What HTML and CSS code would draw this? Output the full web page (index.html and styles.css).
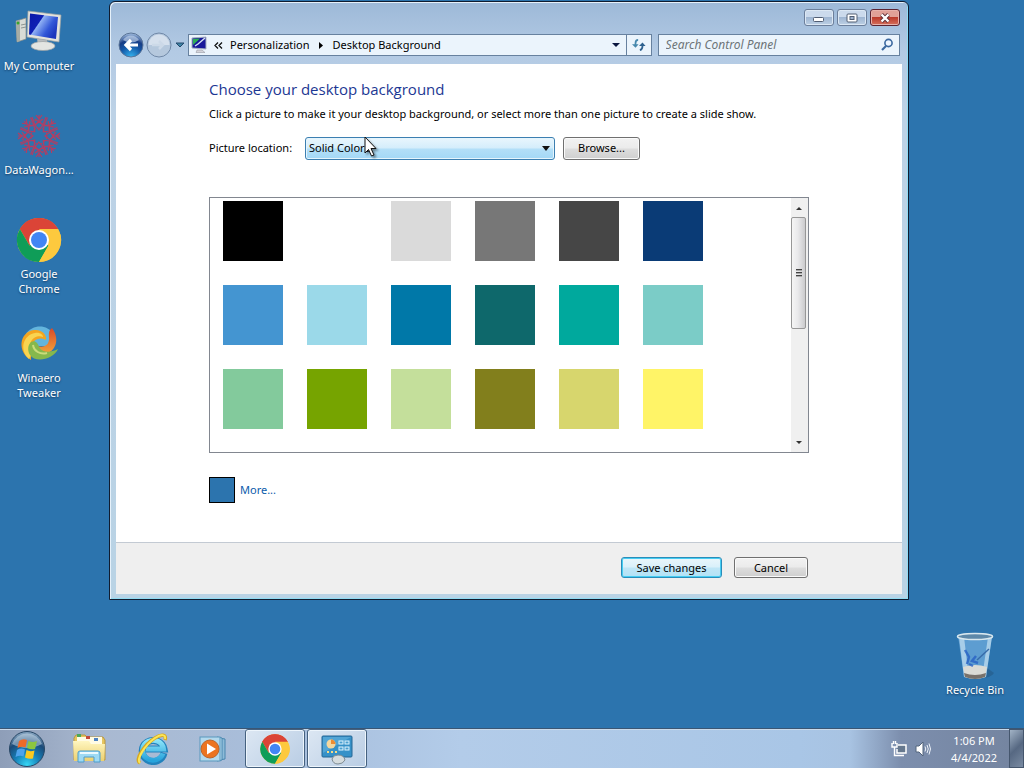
FILE: index.html
```html
<!DOCTYPE html>
<html lang="en">
<head>
<meta charset="utf-8">
<title>Desktop Background</title>
<link rel="stylesheet" href="styles.css">
</head>
<body>
<svg class="defs" aria-hidden="true">
  <defs>
    <symbol id="chrome" viewBox="0 0 48 48">
      <circle cx="24" cy="24" r="22" fill="#fdc93e"/>
      <path d="M24 24 L4.9 13 A22 22 0 0 1 43 13 Z" fill="#db4437"/>
      <path d="M24 13 H43.1 A22 22 0 0 0 4.9 13 L14.5 29.5 Z" fill="#db4437"/>
      <path d="M4.9 13 A22 22 0 0 0 24 46 L33.5 29.5 L24 24 L14.5 29.5 Z" fill="#0f9d58"/>
      <path d="M24 46 A22 22 0 0 0 43.1 13 H24 L33.5 29.5 Z" fill="#fdc93e"/>
      <circle cx="24" cy="24" r="10" fill="#fff"/>
      <circle cx="24" cy="24" r="8" fill="#4285f4"/>
    </symbol>
    <linearGradient id="screen" x1="0" y1="0" x2="1" y2=".6">
      <stop offset="0" stop-color="#0a18a8"/><stop offset=".4" stop-color="#0f1fb4"/><stop offset=".43" stop-color="#8fb0f4"/><stop offset=".75" stop-color="#3358d8"/><stop offset="1" stop-color="#1b35bd"/>
    </linearGradient>
    <linearGradient id="pane" x1="0" y1="0" x2="0" y2="1">
      <stop offset="0" stop-color="#fff6c0"/><stop offset="1" stop-color="#ecd06f"/>
    </linearGradient>
    <radialGradient id="orb" cx=".5" cy=".95" r=".9">
      <stop offset="0" stop-color="#35d6f5"/><stop offset=".4" stop-color="#1680b8"/><stop offset=".75" stop-color="#1b4a78"/><stop offset="1" stop-color="#7f9fbc"/>
    </radialGradient>
    <radialGradient id="back" cx=".5" cy="1" r="1">
      <stop offset="0" stop-color="#35b5f0"/><stop offset=".45" stop-color="#1459a8"/><stop offset=".7" stop-color="#183d85"/><stop offset="1" stop-color="#a9c4e4"/>
    </radialGradient>
    <linearGradient id="ie" x1="0" y1="0" x2="0" y2="1">
      <stop offset="0" stop-color="#8de4f8"/><stop offset="1" stop-color="#27a4dc"/>
    </linearGradient>
    <linearGradient id="flame" x1="0" y1="0" x2="0" y2="1">
      <stop offset="0" stop-color="#d94a28"/><stop offset="1" stop-color="#f4a53a"/>
    </linearGradient>
  </defs>
</svg>

<main class="desktop">
  <nav class="shortcuts" aria-label="Desktop shortcuts">
    <a class="shortcut" href="#computer">
      <svg class="shortcut-icon" viewBox="0 0 48 48" aria-hidden="true">
        <path d="M1 13 L11 10 V31 L2 34 Z" fill="#d9dcd6" stroke="#878c88" stroke-width=".7"/>
        <path d="M1 13 L5 12 V33 L2 34 Z" fill="#a7ada5"/>
        <circle cx="3" cy="15" r="1.500" fill="#36a62e"/>
        <path d="M6 17 L11 16 M6 20 L11 19" stroke="#8e9692"/>
        <path d="M22 30 L32 32 V38 H23 Z" fill="#b8bdc0"/>
        <ellipse cx="28" cy="38" rx="12" ry="4.500" fill="#e3e5e2" stroke="#9a9fa0" stroke-width=".7"/>
        <path d="M13 3 L46 7 L44 34 L12 29 Z" fill="#e4e3dc" stroke="#9aa0a2" stroke-width=".7"/>
        <path d="M15 5.500 L43 9 L41 31 L14 26.500 Z" fill="url(#screen)"/>
      </svg>
      <span>My Computer</span>
    </a>
    <a class="shortcut" href="#datawagon">
      <svg class="shortcut-icon" viewBox="-24 -24 48 48" aria-hidden="true" fill="none" stroke="#b43d62">
        <g id="ray" stroke-width="1.200">
          <path d="M0 -6 L-4 -11 L0 -15 L4 -11 Z M0 -15 V-21 M-4 -11 L-7 -19 M4 -11 L7 -19 M-3 -21 L0 -17 L3 -21 M-4 -11 L4 -17 M4 -11 L-4 -17"/>
        </g>
        <use href="#ray" transform="rotate(45)"/><use href="#ray" transform="rotate(90)"/><use href="#ray" transform="rotate(135)"/>
        <use href="#ray" transform="rotate(180)"/><use href="#ray" transform="rotate(225)"/><use href="#ray" transform="rotate(270)"/><use href="#ray" transform="rotate(315)"/>
        <circle r="8" stroke-dasharray="3 1.500"/><circle r="16" stroke-dasharray="2 3" stroke="#90506f"/>
      </svg>
      <span>DataWagon...</span>
    </a>
    <a class="shortcut" href="#chrome-app">
      <svg class="shortcut-icon" viewBox="0 0 48 48" aria-hidden="true"><use href="#chrome"/></svg>
      <span>Google<br>Chrome</span>
    </a>
    <a class="shortcut" href="#winaero">
      <svg class="shortcut-icon" viewBox="0 0 48 48" aria-hidden="true">
        <path d="M11 14 C17 4 33 4 38 14 L35 26 L24 26 L14 24Z" fill="#64b5dd"/>
        <path d="M37 8 C46 20 40 34 27 34 C20 34 17 30 19 24 C25 29 34 27 34 19 C34 14 33 11 37 8Z" fill="url(#flame)"/>
        <path d="M16 40 C2 32 4 12 19 10 C27 9 32 15 31 20 C24 16 17 20 16 28 Z" fill="#f4a51f"/>
        <path d="M14 39 C4 30 8 15 20 13 C25 12 28 15 28 17 C20 14 11 22 17 33 Z" fill="#f9d451"/>
        <path d="M16 22 C20 20 23 23 24 27 C28 33 35 33 43 29 C38 40 20 43 15 35 C12 30 13 25 16 22Z" fill="#86b84c"/>
        <path d="M18 25 C19 31 25 35 32 33" stroke="#cbdc7b" stroke-width="2" fill="none"/>
      </svg>
      <span>Winaero<br>Tweaker</span>
    </a>
  </nav>

  <section class="window" aria-label="Desktop Background">
    <div class="caption">
      <button class="caption-button" aria-label="Minimize"><svg width="14" height="10" viewBox="0 0 14 10"><rect x="1.500" y="4.500" width="10" height="4" rx="1" fill="#fff" stroke="#515e73"/></svg></button>
      <button class="caption-button" aria-label="Maximize"><svg width="12" height="10" viewBox="0 0 12 10"><rect x="1" y="1" width="10" height="8" rx="1" fill="#fff" stroke="#515e73"/><rect x="4" y="3.500" width="4" height="3" fill="#9fb4cf" stroke="#515e73"/></svg></button>
      <button class="caption-button close" aria-label="Close"><svg width="12" height="10" viewBox="0 0 12 10"><path d="M2.500 1.500 L9.500 8.500 M9.500 1.500 L2.500 8.500" stroke="#5b2d35" stroke-width="4"/><path d="M2.500 1.500 L9.500 8.500 M9.500 1.500 L2.500 8.500" stroke="#fff" stroke-width="2.400"/></svg></button>
    </div>

    <div class="toolbar">
      <div class="history">
        <button class="round" aria-label="Back"><svg width="26" height="26" viewBox="0 0 26 26"><circle cx="13" cy="13" r="12" fill="url(#back)" stroke="#5b7598"/><path d="M5 8 A9.500 9.500 0 0 1 21 8 Q13 13 5 8Z" fill="#c6d9ef" opacity=".65"/><path d="M20 13 H9 M13 8 L8 13 L13 18" stroke="#fff" stroke-width="3.200" fill="none"/></svg></button>
        <button class="round" aria-label="Forward"><svg width="26" height="26" viewBox="0 0 26 26"><circle cx="13" cy="13" r="12" fill="#b5c8dd" stroke="#7189a8"/><path d="M2.500 13 A10.500 10.500 0 0 1 23.500 13 Z" fill="#d5e0ed"/><path d="M6 13 H17 M13 9 L17 13 L13 17" stroke="#ccd9e8" stroke-width="2.500" fill="none"/></svg></button>
        <button class="recent" aria-label="Recent pages"><svg width="10" height="6" viewBox="0 0 10 6"><path d="M1 1 H9 L5 5Z" fill="#3e84a5" stroke="#24486c"/></svg></button>
      </div>
      <div class="address">
        <svg width="18" height="18" viewBox="0 0 18 18" aria-hidden="true"><path d="M1 2 L15 1 V13 L1 12Z" fill="#18189a" stroke="#a7b2c2"/><path d="M2 3 L9 2.500 L2 9Z" fill="#2dae55"/><path d="M4 10 L7 8 L14 2" stroke="#d3e1f3" stroke-width="1.500" fill="none"/><path d="M6 14 H11 L14 16.500 H5Z" fill="#d4d4da" stroke="#8c8f99" stroke-width=".5"/></svg>
        <svg width="9" height="7" viewBox="0 0 9 7" aria-hidden="true"><path d="M4 .5 L1 3.500 L4 6.500 M8 .5 L5 3.500 L8 6.500" fill="none" stroke="#111" stroke-width="1.300"/></svg>
        <a class="crumb" href="#personalization">Personalization</a>
        <svg class="crumb-arrow" width="4" height="7" viewBox="0 0 4 7" aria-hidden="true"><path d="M0 0 L4 3.500 L0 7Z"/></svg>
        <a class="crumb" href="#desktop-background">Desktop Background</a>
        <button class="address-drop" aria-label="Previous locations"><svg width="8" height="4" viewBox="0 0 8 4"><path d="M0 0 H8 L4 4Z" fill="#0b1740"/></svg></button>
        <button class="refresh" aria-label="Refresh"><svg width="14" height="14" viewBox="0 0 16 14"><path d="M7 1 Q4 1 4 5 V7" stroke="#4688ad" stroke-width="2" fill="none"/><path d="M0 6 H7.500 L4 10Z" fill="#4688ad"/><path d="M9 13 Q12 12 12 8 V7" stroke="#2d608e" stroke-width="2" fill="none"/><path d="M8 8 H15.500 L12 4Z" fill="#2d608e"/></svg></button>
      </div>
      <label class="search">
        <input type="search" placeholder="Search Control Panel" aria-label="Search Control Panel">
        <svg width="14" height="14" viewBox="0 0 14 14" aria-hidden="true"><circle cx="8.500" cy="5" r="3.600" fill="#eef6ff" stroke="#3b689f" stroke-width="1.600"/><path d="M6 8 L2 12" stroke="#3b689f" stroke-width="2.200"/></svg>
      </label>
    </div>

    <form class="client">
      <div class="content">
        <h1>Choose your desktop background</h1>
        <p>Click a picture to make it your desktop background, or select more than one picture to create a slide show.</p>
        <div class="location">
          <label for="location">Picture location:</label>
          <div class="combo">
            <select id="location"><option>Solid Colors</option></select>
            <svg class="combo-arrow" width="8" height="5" viewBox="0 0 8 5" aria-hidden="true"><path d="M0 0 H8 L4 5Z" fill="#111"/></svg>
          </div>
          <button class="button browse" type="button">Browse...</button>
        </div>
        <div class="gallery">
          <div class="swatches">
            <button type="button" class="swatch black" aria-label="Black"></button>
            <button type="button" class="swatch white" aria-label="White"></button>
            <button type="button" class="swatch silver" aria-label="Light gray"></button>
            <button type="button" class="swatch gray" aria-label="Gray"></button>
            <button type="button" class="swatch charcoal" aria-label="Dark gray"></button>
            <button type="button" class="swatch navy" aria-label="Navy"></button>
            <button type="button" class="swatch blue" aria-label="Blue"></button>
            <button type="button" class="swatch sky" aria-label="Light blue"></button>
            <button type="button" class="swatch cerulean" aria-label="Cerulean"></button>
            <button type="button" class="swatch pine" aria-label="Dark teal"></button>
            <button type="button" class="swatch teal" aria-label="Teal"></button>
            <button type="button" class="swatch aqua" aria-label="Aqua"></button>
            <button type="button" class="swatch mint" aria-label="Mint"></button>
            <button type="button" class="swatch green" aria-label="Green"></button>
            <button type="button" class="swatch lime" aria-label="Light green"></button>
            <button type="button" class="swatch olive" aria-label="Olive"></button>
            <button type="button" class="swatch khaki" aria-label="Khaki"></button>
            <button type="button" class="swatch yellow" aria-label="Yellow"></button>
          </div>
          <div class="scrollbar">
            <button type="button" class="scroll-step" aria-label="Scroll up"><svg width="6" height="3" viewBox="0 0 6 3"><path d="M3 0 L6 3 H0Z" fill="#333"/></svg></button>
            <div class="thumb"><svg width="6" height="8" viewBox="0 0 6 8"><path d="M0 .5 H6 M0 3.500 H6 M0 6.500 H6" stroke="#444"/><path d="M0 1.500 H6 M0 4.500 H6 M0 7.500 H6" stroke="#aaa"/></svg></div>
            <button type="button" class="scroll-step bottom" aria-label="Scroll down"><svg width="6" height="3" viewBox="0 0 6 3"><path d="M0 0 H6 L3 3Z" fill="#333"/></svg></button>
          </div>
        </div>
        <div class="more"><span class="current"></span><a href="#more">More...</a></div>
      </div>
      <div class="actions">
        <button class="button save" type="button">Save changes</button>
        <button class="button cancel" type="button">Cancel</button>
      </div>
    </form>
  </section>

  <a class="shortcut recycle" href="#recycle">
    <svg class="shortcut-icon" viewBox="0 0 48 48" aria-hidden="true">
      <path d="M36 36 L43 41 Q40 46 30 46Z" fill="#245a86" opacity=".6"/>
      <path d="M7 4 L41 4 L35 45 Q24 49 13 45Z" fill="#6eabdc" opacity=".75"/>
      <path d="M8 5 L13 5 L18 46 L13 45Z M37 5 L41 5 L35 45 L31 46Z" fill="#c8e1f2" opacity=".7"/>
      <path d="M12 35 Q24 31 36 35 L34 45 Q24 49 14 45Z" fill="#dadbd6"/>
      <path d="M13 41 Q24 45 35 41 L34 45 Q24 49 14 45Z" fill="#77716b"/>
      <path d="M14 18 L18 25 L16 32 M25 24 L21 29 L27 31 M18 32 L22 34" stroke="#2862c4" stroke-width="2.500" fill="none" opacity=".8"/>
      <path d="M38 17 L26 28" stroke="#386caa" stroke-width="1.500"/>
      <ellipse cx="24" cy="4.500" rx="17.500" ry="3" fill="#5d88a9" stroke="#d9e8ef" stroke-width="1.500"/>
    </svg>
    <span>Recycle Bin</span>
  </a>
  <svg class="cursor" width="14" height="22" viewBox="0 0 14 22" aria-hidden="true"><path d="M1 1 V17 L4.500 13.500 L7.500 20 L10 19 L7 12.500 H12Z" fill="#fff" stroke="#111"/></svg>
</main>

<footer class="taskbar">
  <button class="start" aria-label="Start">
    <svg width="38" height="38" viewBox="0 0 38 38"><circle cx="19" cy="19" r="17.500" fill="url(#orb)" stroke="#284765"/><path d="M4 14 A16 16 0 0 1 34 14 Q19 22 4 14Z" fill="#e1edf6" opacity=".45"/>
    <path d="M11 11 Q15 8 19 10 L17.500 17.500 Q14 16 9.500 18Z" fill="#ee6a28"/><path d="M20.500 11 Q25 13 29 11 L27 19 Q23 20 19 18Z" fill="#8cc63f"/><path d="M9 20 Q13 17.500 17 19.500 L15.500 26.500 Q12 25 7.500 27Z" fill="#4ea3ec"/><path d="M18.500 20 Q22 22 26.500 20.500 L25 28.500 Q21 29.500 17 27.500Z" fill="#fbc91f"/></svg>
  </button>
  <button class="pin explorer" aria-label="Windows Explorer">
    <svg width="34" height="32" viewBox="0 0 34 32"><path d="M2 5 L4 2 H13 L15 4 H31 L33 7 V27 H2Z" fill="#e6c55f" stroke="#b99742"/><path d="M5 4 H30 V12 H5Z" fill="#fffbe4"/><rect x="5" y="1" width="4" height="3" fill="#4ba75a"/><rect x="14" y="3" width="4" height="3" fill="#c4493c"/><rect x="22" y="5" width="4" height="3" fill="#4e82c2"/><path d="M1 8 H17 L19 11 H33 L32 28 H2Z" fill="url(#pane)"/><path d="M6 29 V20 Q6 18 8 18 H26 Q28 18 28 20 V29 H22 V24 H12 V29Z" fill="#9edaf3" stroke="#4c9dcb"/><path d="M8 20 H26" stroke="#eafaff" stroke-width="2"/></svg>
  </button>
  <button class="pin ie" aria-label="Internet Explorer">
    <svg width="34" height="32" viewBox="0 0 34 32"><path d="M29 20 A11 10.500 0 1 1 29 16 H11" fill="none" stroke="#2283bd" stroke-width="7"/><path d="M28 20.500 A10.500 10 0 1 1 28.500 16 H11" fill="none" stroke="url(#ie)" stroke-width="5"/><path d="M5 30 C-1 27 10 11 20 5 C26 1 32 1 30 7" fill="none" stroke="#d9a91e" stroke-width="3.500"/><path d="M5 30 C1 26 10 12 20 5 C26 1 31 1 30 6" fill="none" stroke="#fbe558" stroke-width="2"/></svg>
  </button>
  <button class="pin wmp" aria-label="Windows Media Player">
    <svg width="28" height="28" viewBox="0 0 28 28"><path d="M20 3 L26 4 V24 L20 25Z" fill="#8dbbd8" stroke="#4886af"/><path d="M18 2 L23 3 V25 L18 26Z" fill="#b6dbee" stroke="#4886af"/><rect x="1" y="2" width="20" height="24" fill="#b3d9ed" stroke="#5b98bd"/><circle cx="11" cy="14" r="9" fill="#ec7420" stroke="#bd6428"/><path d="M8 8.500 L17 14 L8 19.500Z" fill="#fff"/></svg>
  </button>
  <button class="task" aria-label="Google Chrome"><svg width="32" height="32"><use href="#chrome"/></svg></button>
  <button class="task" aria-label="Desktop Background">
    <svg width="34" height="32" viewBox="0 0 34 32"><rect x="2" y="3" width="30" height="21" rx="1" fill="#3691c8" stroke="#256695"/><path d="M3 4 H31 L3 20Z" fill="#6eb9e1" opacity=".5"/><circle cx="11" cy="11" r="4.500" fill="#f5d79d"/><path d="M11 11 V6.500 A4.500 4.500 0 0 1 15.500 11Z" fill="#ee8c31"/><path d="M7 19 H9 M11 19 H13 M15 19 H17" stroke="#f4dc88" stroke-width="2"/><g fill="#4a9fd0" stroke="#e0f5ff"><rect x="19" y="8" width="4" height="3"/><rect x="25" y="8" width="4" height="3"/><rect x="19" y="14" width="4" height="3"/><rect x="25" y="14" width="4" height="3"/></g><path d="M12 26 Q13 22 18 22 Q24 22 25 27 Q23 31 18 31 Q13 31 12 26Z" fill="#d5dcde" stroke="#7e8b92"/></svg>
  </button>
  <div class="tray">
    <svg width="16" height="16" viewBox="0 0 16 16" aria-label="Network"><path d="M7 4 H15 V12 H6 V8" fill="#66788e" stroke="#fff" stroke-width="1.500"/><path d="M8 14.500 H13 M1 2 V6 H6 V2 M2.500 0 V3 M4.500 0 V3 M3.500 6 V14.500 H8" stroke="#fff" stroke-width="1.400" fill="none"/></svg>
    <svg width="16" height="16" viewBox="0 0 16 16" aria-label="Volume"><path d="M1 5 H4 L8 1 V15 L4 11 H1Z" fill="#fff" stroke="#52647c"/><path d="M10 5.500 Q11.500 8 10 10.500 M12 4 Q14.500 8 12 12 M14 2.500 Q17 8 14 13.500" stroke="#eef3fa" fill="none"/></svg>
    <time class="clock" datetime="2022-04-04T13:06"><span>1:06 PM</span><span>4/4/2022</span></time>
  </div>
  <button class="peek" aria-label="Show desktop"></button>
</footer>
</body>
</html>
```

FILE: styles.css
```css
* { box-sizing: border-box; }
body {
  margin: 0;
  min-height: 100vh;
  display: flex;
  flex-direction: column;
  background: #2c74ae;
  color: #000;
  font: 11px/16px "Noto Sans", "Open Sans", sans-serif;
}
button, input, select { font: inherit; color: inherit; }
button { padding: 0; border: 0; background: none; }
svg { display: block; flex: none; }
a { text-decoration: none; }
.defs { position: absolute; width: 0; height: 0; }

.desktop { position: relative; flex: 1; min-height: 640px; }
.shortcuts { width: 78px; padding-top: 8px; }
.shortcut {
  display: flex;
  flex-direction: column;
  align-items: center;
  gap: 2px;
  height: 104px;
  color: #fff;
  line-height: 15px;
  text-align: center;
  white-space: nowrap;
  text-shadow: 0 1px 2px #123a60;
}
.shortcut-icon { width: 48px; height: 48px; }
.recycle { position: absolute; right: 10px; bottom: -8px; width: 78px; }
.cursor { position: absolute; left: 364px; top: 136px; filter: drop-shadow(2px 2px 1px #0006); }

.window {
  position: absolute;
  left: 109px;
  right: 115px;
  top: 1px;
  padding: 0 6px 5px;
  border: 1px solid #101c30;
  border-radius: 6px 6px 0 0;
  background: linear-gradient(#9db9d8, #b3cae4 50px, #bdd2e6 110px, #b9d3e5);
  box-shadow: inset 1px 1px #e6f1fa, inset -1px -1px #8fdcf4;
}
.caption { display: flex; justify-content: flex-end; gap: 3px; padding: 7px 2px 6px; }
.caption-button {
  display: grid;
  place-items: center;
  width: 30px;
  height: 17px;
  border: 1px solid #6c7f9b;
  border-radius: 3px;
  background: linear-gradient(#cbdaec 45%, #9fb6d2 50%, #bdd0e5);
  box-shadow: inset 0 0 0 1px #dce8f4;
}
.close { border-color: #5c2330; background: linear-gradient(#e0a097 45%, #bb3a2b 50%, #d5705c); box-shadow: inset 0 0 0 1px #e7b1aa; }
.toolbar { display: flex; align-items: center; gap: 2px; height: 32px; padding: 0 2px 6px; }
.history { display: flex; align-items: center; gap: 2px; }
.recent { width: 12px; display: grid; place-items: center; }
.address, .search {
  display: flex;
  align-items: center;
  height: 22px;
  border: 1px solid #67819f;
  background: #ebf4fc;
}
.address { flex: 1; gap: 5px; padding-left: 2px; margin-right: 4px; }
.crumb { margin-left: 2px; color: #000; }
.crumb-arrow { margin: 0 3px 0 4px; }
.address-drop { margin-left: auto; width: 20px; height: 20px; display: grid; place-items: center; }
.refresh { width: 25px; height: 20px; margin-left: -5px; display: grid; place-items: center; border-left: 1px solid #67819f; }
.search { width: 31%; padding: 0 5px 0 7px; }
.search input { flex: 1; min-width: 0; padding: 0; border: 0; outline: 0; background: none; font-size: 12px; }
.search input::placeholder { color: #6d7478; font-style: italic; opacity: 1; }

.client { margin: 0; background: #fff; }
.content { padding: 15px 93px 39px; }
h1 { margin: 0; font: 400 15px/20px "Open Sans", "Noto Sans", sans-serif; color: #1c3793; }
p { margin: 7px 0 0; white-space: nowrap; }
.location { display: flex; align-items: center; gap: 8px; margin-top: 14px; height: 24px; }
.location label { width: 88px; white-space: nowrap; }
.combo { position: relative; width: 250px; }
.combo select {
  display: block;
  width: 100%;
  height: 23px;
  padding: 0 3px;
  appearance: none;
  border: 1px solid #3c7fb1;
  border-radius: 3px;
  background: linear-gradient(#e9f6fd, #d4edfb 48%, #b3dff8 52%, #a3d8f6);
  box-shadow: inset 0 0 0 1px #e5f5fd;
}
.combo-arrow { position: absolute; right: 5px; top: 9px; pointer-events: none; }
.button {
  height: 23px;
  border: 1px solid #707070;
  border-radius: 3px;
  background: linear-gradient(#f2f2f2, #ebebeb 48%, #dddddd 52%, #cfcfcf);
  box-shadow: inset 0 0 0 1px #fafafa;
}
.browse { width: 77px; }
.gallery { display: flex; justify-content: space-between; margin-top: 37px; border: 1px solid #828790; min-height: 256px; }
.swatches { display: grid; grid-template-columns: repeat(6, 60px); grid-auto-rows: 60px; gap: 24px; padding: 3px 0 0 13px; }
.swatch.black { background: #000; }
.swatch.white { background: #fff; }
.swatch.silver { background: #dadada; }
.swatch.gray { background: #777; }
.swatch.charcoal { background: #464646; }
.swatch.navy { background: #0a3b76; }
.swatch.blue { background: #4495d1; }
.swatch.sky { background: #9bd9e9; }
.swatch.cerulean { background: #0078a8; }
.swatch.pine { background: #0e686b; }
.swatch.teal { background: #00a99d; }
.swatch.aqua { background: #7bccc7; }
.swatch.mint { background: #83ca9c; }
.swatch.green { background: #76a400; }
.swatch.lime { background: #c4df9b; }
.swatch.olive { background: #827f1c; }
.swatch.khaki { background: #d7d66d; }
.swatch.yellow { background: #fff467; }
.scrollbar { display: flex; flex-direction: column; width: 17px; padding: 1px 2px 1px 0; background: #f0f0f0; }
.scroll-step { display: grid; place-items: center; height: 18px; }
.bottom { margin-top: auto; }
.thumb {
  display: grid;
  place-items: center;
  height: 112px;
  border: 1px solid #979797;
  border-radius: 2px;
  background: linear-gradient(90deg, #f5f5f5, #e9e9eb 45%, #cbcbcd);
}
.more { display: flex; align-items: center; gap: 5px; margin-top: 24px; }
.more a { color: #0b5bab; }
.current { width: 26px; height: 26px; border: 1px solid #000; background: #2c74ae; }
.actions { display: flex; justify-content: flex-end; gap: 12px; padding: 14px 94px 16px; border-top: 1px solid #c3cad3; background: #efefef; }
.actions .button { height: 21px; }
.actions .save { width: 101px; border-color: #2a8dba; background: linear-gradient(#eaf6fb, #d9f0fa 48%, #bfe6f6 52%, #b2e2f6); box-shadow: inset 0 0 0 1px #46cdf2; }
.actions .cancel { width: 74px; }

.taskbar {
  display: flex;
  align-items: stretch;
  height: 40px;
  border-top: 1px solid #3a5674;
  background: linear-gradient(90deg, #8e9eb8, #a9b9d1 10%, #a8bfdd 30%, #b3cce9 45%, #a9c6e6 78%, #a8c3e2 83%, #7c8ead 88%, #74849f);
  box-shadow: inset 0 1px #c9daeb;
}
.taskbar button { display: grid; place-items: center; }
.start { width: 54px; }
.pin { width: 62px; }
.explorer { width: 70px; }
.ie { width: 56px; }
.wmp { width: 65px; }
.task {
  width: 60px;
  margin-right: 2px;
  border: 1px solid #45617f;
  border-radius: 3px;
  background: linear-gradient(135deg, #dce7f3, #b9cde4);
  box-shadow: inset 0 0 0 1px #edf5fc;
}
.tray { display: flex; align-items: center; gap: 8px; margin-left: auto; padding-right: 12px; color: #fff; }
.clock { display: grid; margin-left: 12px; line-height: 17px; text-align: center; }
.taskbar .peek { width: 15px; border: 1px solid #45566d; background: linear-gradient(135deg, #a2b3c6, #566882 50%, #7a8ba2); }
```
